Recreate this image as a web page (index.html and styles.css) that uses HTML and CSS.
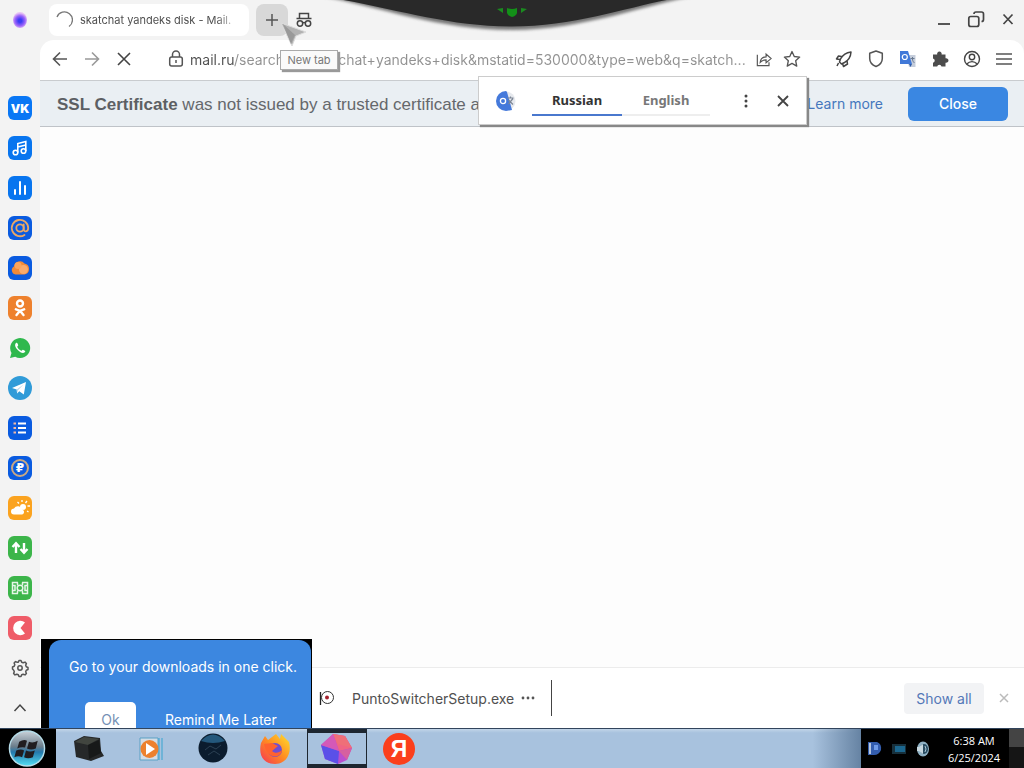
FILE: index.html
```html
<!DOCTYPE html>
<html lang="en">
<head>
<meta charset="utf-8">
<title>skatchat yandeks disk - Mail.ru</title>
<link rel="stylesheet" href="styles.css">
</head>
<body>
<div class="screen">
  <div class="browser">
    <nav class="sidebar" aria-label="Services">
      <a class="home" href="#" aria-label="Home"><span class="orb"></span></a>
      <a class="app vk" href="#">VK</a>
      <a class="app azure" href="#" aria-label="Music"><svg viewBox="0 0 24 24"><g fill="none" stroke="#fff" stroke-width="1.600"><circle cx="7.500" cy="16.500" r="2.300"/><circle cx="15.500" cy="15" r="2.300"/><path d="M9.800 16.500V7.500L17.800 5.500V15M9.800 11L17.800 9"/></g></svg></a>
      <a class="app azure" href="#" aria-label="Charts"><svg viewBox="0 0 24 24"><path d="M7 14v4M12 6v12M17 10v8" stroke="#fff" stroke-width="2" stroke-linecap="round"/></svg></a>
      <a class="app royal" href="#" aria-label="Mail"><svg viewBox="0 0 24 24"><g fill="none" stroke="#e9a765" stroke-width="1.800" stroke-linecap="round"><circle cx="12" cy="12" r="3.700"/><path d="M15.700 8.500V13c0 3.500 4.500 3 4.500-1a8.200 8.200 0 1 0-3.700 6.900"/></g></svg></a>
      <a class="app royal" href="#" aria-label="Cloud"><svg viewBox="0 0 24 24"><path d="M7.500 18.500a4.300 4.300 0 0 1-1.500-8A6 6 0 0 1 16.500 7.500a5.600 5.600 0 0 1 0 11z" fill="#ef8a38"/><circle cx="15.500" cy="13.500" r="4.500" fill="#f8ab6c"/><circle cx="10" cy="9.500" r="3.500" fill="#f9a55c"/></svg></a>
      <a class="app orange" href="#" aria-label="Odnoklassniki"><svg viewBox="0 0 24 24"><g fill="none" stroke="#fff" stroke-width="2.400" stroke-linecap="round"><circle cx="12" cy="7.500" r="3"/><path d="M7.800 13.300c2.600 1.600 5.800 1.600 8.400 0M12 14.800L8.500 19M12 14.800l3.500 4.200"/></g></svg></a>
      <a class="app" href="#" aria-label="WhatsApp"><svg viewBox="0 0 24 24"><path d="M2 22l1.500-5A10 10 0 1 1 7.200 20.700z" fill="#2fb84d"/><path d="M8 7c-2 2-.3 5 2 7.200s5 3.800 7 1.800c.7-.8.300-1.200-2-2.300-.8-.3-1 1.200-1.700 1-1.900-.6-3.500-2.300-4-3.700-.2-.6 1.300-1 .9-1.900C9.400 6.900 9 6.200 8 7z" fill="#fff"/></svg></a>
      <a class="app" href="#" aria-label="Telegram"><svg viewBox="0 0 24 24"><circle cx="12" cy="12" r="12" fill="#309bd8"/><path d="M4 12l14-6-2.200 12.500-4.500-3.300-2.200 2.200-.4-4z" fill="#fff"/><path d="M8.700 13.400L15.500 8.500l-5.500 5.800-.9 3z" fill="#b9d9ee"/></svg></a>
      <a class="app royal" href="#" aria-label="News"><svg viewBox="0 0 24 24"><path d="M10 7.500h8M10 12h8M10 16.500h8" stroke="#fff" stroke-width="2"/><path d="M5.500 7.500h2.500M5.500 12h2.500M5.500 16.500h2.500" stroke="#f2b8a4" stroke-width="2"/></svg></a>
      <a class="app royal coin" href="#"><span>₽</span></a>
      <a class="app amber" href="#" aria-label="Weather"><svg viewBox="0 0 24 24"><circle cx="15" cy="11" r="3" fill="#fff"/><path d="M14 4v2M19 5l-1.500 2M22 10h-2.500M9.500 6l1.500 1.500M19 15l1.500 1" stroke="#fff" stroke-width="1.300"/><path d="M6 18.500a3 3 0 0 1 0-6 4.500 4.500 0 0 1 8.300 1.200 2.500 2.500 0 0 1 0 4.800z" fill="#fff"/></svg></a>
      <a class="app green" href="#" aria-label="Transfers"><svg viewBox="0 0 24 24"><path d="M8 17V8M4.500 11L8 7.300l3.500 3.700M16 7v9M12.500 13l3.500 3.700 3.500-3.700" fill="none" stroke="#fff" stroke-width="2.400"/></svg></a>
      <a class="app green" href="#" aria-label="Football"><svg viewBox="0 0 24 24"><g fill="none" stroke="#e5f6e7" stroke-width="1.500"><path d="M10 6.500H4.500v11H10M14 6.500h5.500v11H14M4.500 9.500H7v5H4.500M19.500 9.500H17v5h2.500M9.500 6.500v3M14.500 6.500v3M9.500 14.500v3M14.500 14.500v3"/><circle cx="12" cy="12" r="2.800"/></g></svg></a>
      <a class="app coral" href="#" aria-label="Games"><svg viewBox="0 0 24 24"><path d="M17 6.500A7.200 7.200 0 1 0 17 17.500L12.500 12z" fill="#fff"/></svg></a>
      <button class="side-btn" aria-label="Settings"><svg viewBox="0 0 24 24"><g fill="none" stroke="#555" stroke-width="1.500" stroke-linejoin="round"><path d="M10.300 6.200L11 4.500h2l.7 1.700 1.500.6 1.800-.7 1.400 1.400-.7 1.800.6 1.500 1.700.7v2l-1.700.7-.6 1.500.7 1.800-1.400 1.400-1.800-.7-1.500.6-.7 1.700h-2l-.7-1.700-1.500-.6-1.800.7-1.400-1.400.7-1.800-.6-1.500L4.500 13v-2l1.700-.7.600-1.500L6.100 7l1.400-1.400 1.800.7z"/><circle cx="12" cy="12" r="2.200"/></g></svg></button>
      <button class="side-btn" aria-label="Collapse"><svg viewBox="0 0 24 24"><path d="M6.500 15l5.500-6 5.500 6" fill="none" stroke="#444" stroke-width="1.500"/></svg></button>
    </nav>

    <div class="window">
      <header class="tabs">
        <div class="tab"><svg class="spin" viewBox="0 0 18 18"><path d="M2 6A8 8 0 1 1 14 15.500" fill="none" stroke="#777" stroke-width="1.300"/></svg><span>skatchat yandeks disk - Mail.</span></div>
        <button class="new-tab" aria-label="New tab"><svg viewBox="0 0 24 24"><path d="M12 6v12M6 12h12" stroke="#555" stroke-width="1.500"/></svg></button>
        <button class="ico" aria-label="Incognito"><svg viewBox="0 0 24 24"><g fill="none" stroke="#444" stroke-width="1.500"><path d="M7.500 10V5.500h9V10M4.500 10.500h15"/><circle cx="8" cy="15.500" r="2.700"/><circle cx="16" cy="15.500" r="2.700"/><path d="M10.500 15c1-.8 2-.8 3 0"/></g></svg></button>
        <div class="controls">
          <button class="ico" aria-label="Minimize"><svg viewBox="0 0 24 24"><path d="M6 16h12" stroke="#444" stroke-width="1.800"/></svg></button>
          <button class="ico" aria-label="Restore"><svg viewBox="0 0 24 24"><g fill="none" stroke="#444" stroke-width="1.700"><rect x="4.800" y="8.500" width="10" height="10" rx="2"/><path d="M10 6Q10 4 12 4h5.500q2 0 2 2v5.500q0 2-2 2"/></g></svg></button>
          <button class="ico" aria-label="Close window"><svg viewBox="0 0 24 24"><path d="M7.500 6.500l9 9.500M16.500 6.500l-9 9.500" stroke="#444" stroke-width="1.700"/></svg></button>
        </div>
      </header>

      <div class="toolbar">
        <button class="ico" aria-label="Back"><svg viewBox="0 0 24 24"><path d="M19 12H5.500M12 5.500L5.500 12l6.500 6.500" fill="none" stroke="#555" stroke-width="1.600"/></svg></button>
        <button class="ico" aria-label="Forward"><svg viewBox="0 0 24 24"><path d="M5 12h13.500M12 5.500l6.500 6.500-6.500 6.500" fill="none" stroke="#999" stroke-width="1.600"/></svg></button>
        <button class="ico" aria-label="Stop"><svg viewBox="0 0 24 24"><path d="M6 6l12 12M18 6L6 18" stroke="#444" stroke-width="1.600"/></svg></button>
        <div class="address">
          <svg viewBox="0 0 20 20"><g fill="none" stroke="#555" stroke-width="1.500"><rect x="3.700" y="8" width="12.600" height="9" rx="2"/><path d="M6.500 8V5.500a3.500 3.500 0 0 1 7 0V8M10 11v3"/></g></svg>
          <input class="url" type="text" aria-label="Address" value="mail.ru/search?fr=skatchat+yandeks+disk&amp;mstatid=530000&amp;type=web&amp;q=skatch...">
          <button class="ico small" aria-label="Share"><svg viewBox="0 0 24 24"><path d="M4 7v13h14v-4M7.500 16c.5-4.500 3-6.500 7-6.500V6l6 5.500-6 5v-3.500c-3 0-5 .8-7 3z" fill="none" stroke="#555" stroke-width="1.400"/></svg></button>
          <button class="ico small" aria-label="Bookmark"><svg viewBox="0 0 24 24"><path d="M12 3l2.700 6 6.500.7-4.800 4.400 1.300 6.400L12 17.300l-5.700 3.200 1.300-6.400L2.800 9.700 9.300 9z" fill="none" stroke="#555" stroke-width="1.600" stroke-linejoin="round"/></svg></button>
        </div>
        <div class="extensions">
          <button class="ico" aria-label="Boost"><svg viewBox="0 0 24 24"><path d="M8.500 12c2.500-4.500 5.500-6.500 10.500-7-.3 4.800-2.300 8.200-6.500 10.500L9.500 17l-2-2zM9.500 9.500L6.500 9 4.500 12l3.500.5M15 13.500l.5 3.500-4 2.500-1-3M6.500 16L5 19" fill="none" stroke="#444" stroke-width="1.500" stroke-linejoin="round"/></svg></button>
          <button class="ico" aria-label="Protection"><svg viewBox="0 0 24 24"><path d="M12 4l6.300 2.300v5.200c0 3.500-2.500 6.500-6.300 8-3.800-1.500-6.300-4.500-6.300-8V6.300z" fill="none" stroke="#555" stroke-width="1.500" stroke-linejoin="round"/></svg></button>
          <button class="ico" aria-label="Translate"><svg viewBox="0 0 24 24"><path d="M10 8h9.500v12H13z" fill="#c5cddb"/><path d="M4 4h8l4 13H4z" fill="#4179d8"/><path d="M13 17h3l-1.500 3z" fill="#315da8"/><circle cx="8.800" cy="10" r="2.500" fill="none" stroke="#fff" stroke-width="1.200"/><path d="M14.500 11.500h4M16.500 10v2c0 2 1 3 2 4" fill="none" stroke="#687890"/></svg></button>
          <button class="ico" aria-label="Extensions"><svg viewBox="0 0 24 24"><path d="M5 7.500h4.200a2.300 2.300 0 1 1 4.400 0H17.500v3.800a2.300 2.300 0 1 1 0 4.400V19.500h-4a2.200 2.200 0 0 0-4.300 0H5v-3.800a2.200 2.200 0 0 0 0-4.300z" fill="#4c4c4c"/></svg></button>
          <button class="ico" aria-label="Profile"><svg viewBox="0 0 24 24"><g fill="none" stroke="#444" stroke-width="1.400"><circle cx="12" cy="12" r="7.500"/><circle cx="12" cy="10" r="2.700"/><path d="M6.800 17c3-3.200 7.400-3.200 10.400 0"/></g></svg></button>
          <button class="ico" aria-label="Menu"><svg viewBox="0 0 24 24"><path d="M4 7h16M4 12h16M4 17h16" stroke="#555" stroke-width="1.400"/></svg></button>
        </div>
      </div>

      <section class="notice">
        <p><strong>SSL Certificate</strong> was not issued by a trusted certificate authority</p>
        <a href="#">Learn more</a>
        <button class="close-btn">Close</button>
      </section>

      <main class="page"></main>

      <footer class="downloads">
        <svg class="file" viewBox="0 0 16 16"><circle cx="8.500" cy="7.500" r="6" fill="#fff" stroke="#333" stroke-width="1"/><path d="M1.500 2v13" stroke="#222" stroke-width="1.300"/><circle cx="8" cy="7.500" r="2" fill="#a5202c"/></svg>
        <a class="filename" href="#">PuntoSwitcherSetup.exe</a>
        <button class="more" aria-label="More actions"><svg viewBox="0 0 14 4"><g fill="#555"><circle cx="2" cy="2" r="1.400"/><circle cx="7" cy="2" r="1.400"/><circle cx="12" cy="2" r="1.400"/></g></svg></button>
        <span class="divider"></span>
        <button class="show-all">Show all</button>
        <button class="dismiss" aria-label="Dismiss"><svg viewBox="0 0 12 12"><path d="M2 2l8 8M10 2l-8 8" stroke="#bbb" stroke-width="1.500"/></svg></button>
      </footer>
    </div>

    <svg class="notch" viewBox="0 0 384 36" aria-hidden="true">
      <defs><filter id="soft" x="-10%" y="-20%" width="120%" height="160%"><feGaussianBlur stdDeviation="1.800"/></filter></defs>
      <path d="M0-4C60 7 120 30 192 30S330 3 376-4z" fill="#777" filter="url(#soft)"/>
      <path d="M18-1C80 10 130 26.500 192 26.500S312 6 352-1z" fill="#292929"/>
      <path d="M177 9l6-1v5zM207 9l-6-1v5z" fill="#1b8a20"/><path d="M187 8q5 2 10 0v5q-1 3-5 4-4-1-5-4z" fill="#139018"/>
    </svg>
    <svg class="cursor" viewBox="0 0 28 26" aria-hidden="true"><path d="M1 1l25 9-10 4-4 10z" fill="#b2b2b2" stroke="#ddd"/><path d="M3 2l12 11-4 9z" fill="#999"/></svg>
    <div class="tooltip" role="tooltip">New tab</div>

    <div class="translate">
      <svg class="badge" viewBox="0 0 20 20"><circle cx="10" cy="10" r="9.500" fill="#e6e9ee"/><path d="M10 0a10 10 0 0 0 0 20l6-1-5-18z" fill="#4479db"/><circle cx="7" cy="10" r="2.600" fill="none" stroke="#fff" stroke-width="1.300"/><path d="M11.500 7h6M14.500 5.500V7M12.500 13l4.500-5.500M12.500 9l4.500 4.500" fill="none" stroke="#7c8695" stroke-width="1.200"/></svg>
      <div class="langs"><button class="lang active">Russian</button><button class="lang">English</button></div>
      <button class="ico" aria-label="Options"><svg viewBox="0 0 24 24"><g fill="#444"><circle cx="12" cy="7" r="1.500"/><circle cx="12" cy="12" r="1.500"/><circle cx="12" cy="17" r="1.500"/></g></svg></button>
      <button class="ico" aria-label="Close translation"><svg viewBox="0 0 24 24"><path d="M7 7l10 10M17 7L7 17" stroke="#444" stroke-width="1.800"/></svg></button>
    </div>

    <div class="promo-back">
      <div class="promo">
        <p>Go to your downloads in one click.</p>
        <div class="promo-actions"><button class="ok">Ok</button><button class="later">Remind Me Later</button></div>
      </div>
    </div>
  </div>

  <div class="taskbar">
    <button class="start" aria-label="Start"><svg viewBox="0 0 40 40"><defs><linearGradient id="so" x2="0" y2="1"><stop stop-color="#c9d2d9"/><stop offset=".45" stop-color="#6a7c8a"/><stop offset=".6" stop-color="#2479ac"/><stop offset="1" stop-color="#55e0f5"/></linearGradient></defs><circle cx="20" cy="20" r="18" fill="url(#so)" stroke="#b5dce8" stroke-width="1.500"/><path d="M12 13q5-3 8-1l-2 7q-4-1-8 1zM22 13q4 2 9-1l-2 8q-5 2-9 0zM9 22q5-2 8 0l-2 7q-4-2-8 0zM19 22q4 2 9 0l-2 7q-5 2-9 0z" fill="#211d20"/></svg></button>
    <div class="tasks">
      <button class="task" aria-label="Computer"><svg viewBox="0 0 32 32"><path d="M1 8L11 3l16 2 1 13 3 5-13 5L3 24z" fill="#262829"/><path d="M2 9l9-5 15 2-11 6z" fill="#41453f"/><path d="M15 12l11-5 2 13-12 6z" fill="#171919"/></svg></button>
      <button class="task" aria-label="Media player"><svg viewBox="0 0 32 32"><path d="M5 5h18v22H5z" fill="#d5dde5" stroke="#5aa1c5"/><path d="M24 5v22M27 5v22" stroke="#36a4d0"/><circle cx="14.500" cy="16" r="9" fill="#ed812d"/><path d="M11 10l9 6-9 6z" fill="#fff"/></svg></button>
      <button class="task" aria-label="Globe"><svg viewBox="0 0 32 32"><circle cx="16" cy="15" r="14.500" fill="#0b1c2e"/><path d="M4 8Q16-5 28 8 16 12 4 8z" fill="#24587c"/><path d="M8 17l5-4 6 3 5-4M11 22l6-4 6 4" fill="none" stroke="#2b4053"/></svg></button>
      <button class="task" aria-label="Firefox"><svg viewBox="0 0 32 32"><defs><linearGradient id="ff" x1="1" x2="0" y2="1"><stop stop-color="#ffe12d"/><stop offset=".5" stop-color="#ff8b22"/><stop offset="1" stop-color="#f43158"/></linearGradient></defs><path d="M2 10l4-7 3 4 8-6 4 5 1-5 8 8c3 12-3 22-14 22S-1 23 2 10z" fill="url(#ff)"/><circle cx="16" cy="17" r="7" fill="#704ed0"/><path d="M5 11l8-1 6 3-6 5c3 3 7 2 10-1-1 9-15 10-18-6z" fill="#ff622f"/></svg></button>
      <button class="task current" aria-label="Browser"><svg viewBox="0 0 32 32"><path d="M12 1l12 2 7 12-5 12-9 4L4 26 0 12z" fill="#b94ed0"/><path d="M12 1l12 2 7 12-13 3z" fill="#f06583"/><path d="M0 12l18 6-1 13L4 26z" fill="#5b50e8"/><path d="M18 18l13-3-5 12z" fill="#d660a0"/><path d="M0 12L12 1l6 17z" fill="#d459b8"/><path d="M12 1l5 10 14 4-7-12z" fill="#ef6f78"/></svg></button>
      <button class="task"><span class="ya">Я</span></button>
    </div>
    <div class="tray">
      <svg viewBox="0 0 16 16"><path d="M1 1h9q5 2 4 8-2 5-7 5H1z" fill="#335dae"/><path d="M2 2h2v11H2z" fill="#b5c5df"/><path d="M7 4h4v5H7z" fill="#6f9be8"/></svg>
      <svg viewBox="0 0 16 16"><path d="M1 3h14v10H1z" fill="#17303c"/><path d="M4 5h10v6H4z" fill="#1b668e"/></svg>
      <svg viewBox="0 0 16 16"><ellipse cx="8" cy="8" rx="6" ry="7.500" fill="#8fb1c4"/><ellipse cx="9" cy="8" rx="4" ry="5" fill="#284b60"/><path d="M2 6h2l4-3v10l-4-3H2z" fill="#c7d8e0"/><path d="M10 5q2 3 0 6" fill="none" stroke="#a8c6d6"/></svg>
      <div class="clock"><span>6:38 AM</span><span>6/25/2024</span></div>
      <button class="desktop" aria-label="Show desktop"></button>
    </div>
  </div>
</div>
</body>
</html>
```

FILE: styles.css
```css
* { box-sizing: border-box; }
body { margin: 0; font-family: Inter, "Noto Sans", sans-serif; font-size: 14px; color: #505050; }
button { border: 0; padding: 0; background: none; font: inherit; color: inherit; }
p { margin: 0; }
a { text-decoration: none; color: inherit; }
svg { display: block; }

.screen { display: flex; flex-direction: column; height: 100vh; overflow: hidden; }
.browser { position: relative; flex: 1; min-height: 0; display: flex; background: #f3f3f3; overflow: hidden; }

.sidebar { width: 40px; flex: none; display: flex; flex-direction: column; align-items: center; gap: 16px; }
.home { height: 80px; display: flex; align-items: flex-start; padding-top: 12px; }
.orb { width: 14px; height: 16px; border-radius: 50%; background: radial-gradient(circle at 50% 55%, #3c3cf4 15%, #9a62fa 45%, #e8c4f4 70%); }
.app { flex: none; width: 24px; height: 24px; border-radius: 6px; display: flex; align-items: center; justify-content: center; color: #fff; }
.app svg { width: 24px; height: 24px; }
.vk { background: #0a77f5; font-size: 12px; font-weight: 900; }
.azure { background: #0875ef; }
.royal { background: #0a5be0; }
.orange { background: #ee812d; }
.amber { background: #fba31f; }
.green { background: #3cb54a; }
.coral { background: #ef5c68; }
.coin span { width: 18px; height: 18px; border: 2px solid #c9a884; border-radius: 50%; font: 700 12px/14px "DejaVu Sans", sans-serif; text-align: center; }
.side-btn { flex: none; width: 24px; height: 24px; }

.window { flex: 1; min-width: 0; display: flex; flex-direction: column; }
.tabs { flex: none; height: 40px; padding: 4px 4px 4px 9px; display: flex; align-items: center; }
.tab { width: 200px; height: 32px; padding: 0 8px 0 6px; display: flex; align-items: center; gap: 7px; background: #fff; border-radius: 8px; font-size: 11px; }
.tab span { white-space: nowrap; mask-image: linear-gradient(90deg, #000 90%, #0006); }
.spin { width: 18px; height: 18px; flex: none; }
.new-tab { width: 32px; height: 32px; margin: 0 4px 0 7px; padding: 4px; background: #d8d8d8; border-radius: 8px; }
.ico { width: 24px; height: 24px; flex: none; }
.ico svg { width: 24px; height: 24px; }
.ico.small, .ico.small svg { width: 20px; height: 20px; }
.controls { margin-left: auto; display: flex; gap: 8px; }

.toolbar { flex: none; height: 41px; padding: 0 8px 2px; display: flex; align-items: center; gap: 8px; background: #fff; border-bottom: 1px solid #c9cccf; border-radius: 14px 14px 0 0; }
.address { flex: 1; min-width: 0; margin-left: 22px; display: flex; align-items: center; gap: 4px; }
.address > svg { width: 20px; height: 20px; flex: none; }
.url { flex: 1; min-width: 0; height: 24px; border: 0; padding: 0; font: 14px Inter, sans-serif; color: transparent; background: linear-gradient(90deg, #505050 44px, #919191 44px); background-clip: text; outline: none; }
.ico.small + .ico.small { margin-left: 4px; }
.extensions { margin-left: 22px; display: flex; gap: 8px; }

.notice { flex: none; height: 46px; padding: 0 16px 0 17px; display: flex; align-items: center; background: #eaeff3; border-bottom: 1px solid #bfc3c8; }
.notice p { flex: 1; min-width: 0; padding-top: 3px; overflow: hidden; white-space: nowrap; font: 17px "Liberation Sans", Arial, sans-serif; color: #65686c; }
.notice strong { color: #5c5f63; }
.notice a { margin-right: 25px; color: #4577bd; }
.close-btn { width: 100px; height: 34px; border-radius: 6px; background: #3a87e2; color: #fff; font-weight: 500; }

.page { flex: 1; background: #fdfdfd; }
.downloads { flex: none; height: 61px; padding: 0 14px 0 279px; display: flex; align-items: center; background: #fff; border-top: 1px solid #ececec; }
.file { width: 16px; height: 16px; flex: none; }
.filename { margin-left: 17px; }
.more { margin-left: 7px; }
.more svg { width: 14px; height: 4px; }
.divider { width: 1px; height: 36px; margin-left: 16px; background: #444; }
.show-all { width: 80px; height: 31px; margin-left: auto; background: #f2f3f5; border-radius: 4px; color: #5478b8; }
.dismiss { margin-left: 14px; }
.dismiss svg { width: 12px; height: 12px; }

.notch { position: absolute; top: 0; left: calc(50% - 192px); width: 384px; height: 36px; }
.cursor { position: absolute; left: 280px; top: 22px; width: 28px; height: 26px; }
.tooltip { position: absolute; left: 280px; top: 50px; width: 58px; height: 20px; border: 1px solid #aaa; background: #fafafa; box-shadow: 2px 2px 1px #999; font-size: 11px; line-height: 18px; text-align: center; color: #777; }
.translate { position: absolute; left: 478px; top: 76px; width: 329px; height: 49px; padding: 0 12px 0 17px; display: flex; align-items: center; background: #fff; border: 1px solid #ccc; box-shadow: 2px 2px 1px #888; }
.badge { width: 20px; height: 20px; flex: none; }
.langs { margin: 0 24px 0 16px; display: flex; }
.lang { width: 88px; height: 30px; border-bottom: 2px solid #eee; font: 700 13px "Noto Sans", sans-serif; color: #777; }
.lang.active { width: 90px; border-color: #4a78ce; color: #333; }
.translate .ico + .ico { margin-left: 13px; }

.promo-back { position: absolute; left: 41px; bottom: 0; width: 271px; height: 89px; padding: 1px 1px 0 8px; background: #000; }
.promo { height: 88px; padding: 18px 14px 0 20px; overflow: hidden; border-radius: 12px 12px 0 0; background: #3c87e0; color: #fff; white-space: nowrap; }
.promo-actions { display: flex; align-items: center; gap: 29px; margin: 26px 0 0 16px; }
.promo p { line-height: 18px; }
.ok { flex: none; width: 51px; height: 34px; border-radius: 5px; background: #fff; color: #7591b5; }

.taskbar { flex: none; height: 40px; display: flex; background: linear-gradient(#c2d5e8, #a8c2de 10%, #a8c2de); border-top: 1px solid #31445c; }
.start { width: 56px; padding-left: 7px; background: #000; }
.start svg { width: 40px; height: 39px; }
.tasks { flex: 1; display: flex; align-items: center; padding-left: 2px; background: linear-gradient(90deg, transparent 94%, #6683a3); }
.task { width: 62px; height: 39px; display: flex; align-items: center; justify-content: center; }
.task svg { width: 32px; height: 32px; }
.current { width: 60px; margin: 0 1px; border: 1px solid #1d2630; border-width: 4px 1px; }
.ya { width: 32px; height: 32px; border-radius: 50%; background: #fb3f1c; color: #fff; font: 700 23px/32px "Liberation Sans", sans-serif; }
.tray { flex: none; display: flex; align-items: center; gap: 8px; padding-left: 6px; background: #000; color: #fff; }
.tray > svg { width: 16px; height: 16px; }
.clock { width: 62px; display: flex; flex-direction: column; align-items: center; margin: 0 -4px 0 4px; font: 11px/17px "Open Sans", sans-serif; }
.desktop { width: 15px; height: 39px; background: linear-gradient(#444 45%, #151515 46%); }
```
